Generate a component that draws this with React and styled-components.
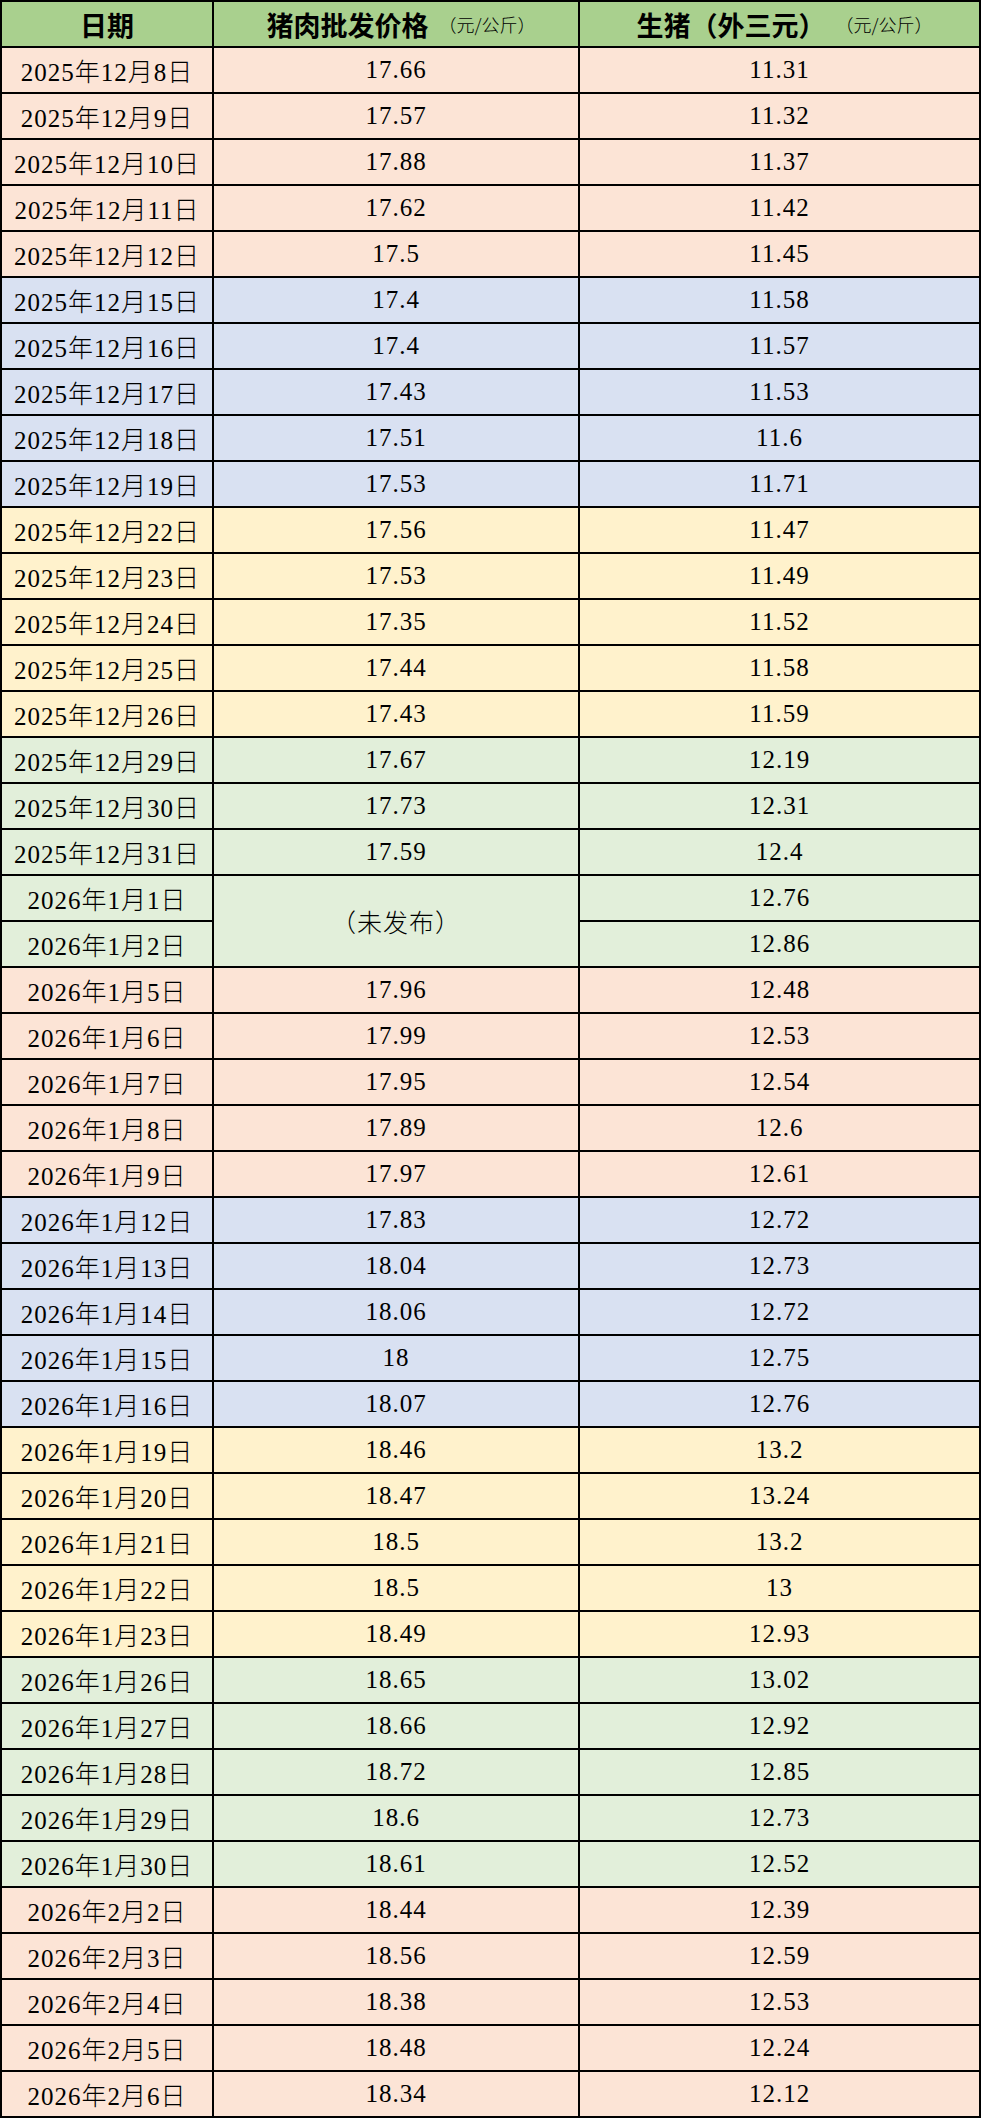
import React from "react";
import styled, { createGlobalStyle } from "styled-components";

const GlobalStyle = createGlobalStyle`
  html, body {
    margin: 0;
    padding: 0;
    background: #ffffff;
  }
  body {
    font-family: "Liberation Serif", "Noto Sans CJK SC", serif;
  }
`;

// 每周一个底色，和原表格一致
const tones = {
  peach: "#fce4d6",
  blue: "#d9e1f2",
  yellow: "#fff2cc",
  green: "#e2efda",
};

const weeks = [
  {
    tone: "peach",
    rows: [
      ["2025年12月8日", "17.66", "11.31"],
      ["2025年12月9日", "17.57", "11.32"],
      ["2025年12月10日", "17.88", "11.37"],
      ["2025年12月11日", "17.62", "11.42"],
      ["2025年12月12日", "17.5", "11.45"],
    ],
  },
  {
    tone: "blue",
    rows: [
      ["2025年12月15日", "17.4", "11.58"],
      ["2025年12月16日", "17.4", "11.57"],
      ["2025年12月17日", "17.43", "11.53"],
      ["2025年12月18日", "17.51", "11.6"],
      ["2025年12月19日", "17.53", "11.71"],
    ],
  },
  {
    tone: "yellow",
    rows: [
      ["2025年12月22日", "17.56", "11.47"],
      ["2025年12月23日", "17.53", "11.49"],
      ["2025年12月24日", "17.35", "11.52"],
      ["2025年12月25日", "17.44", "11.58"],
      ["2025年12月26日", "17.43", "11.59"],
    ],
  },
  {
    tone: "green",
    rows: [
      ["2025年12月29日", "17.67", "12.19"],
      ["2025年12月30日", "17.73", "12.31"],
      ["2025年12月31日", "17.59", "12.4"],
      ["2026年1月1日", "（未发布）", "12.76", 2],
      ["2026年1月2日", null, "12.86"],
    ],
  },
  {
    tone: "peach",
    rows: [
      ["2026年1月5日", "17.96", "12.48"],
      ["2026年1月6日", "17.99", "12.53"],
      ["2026年1月7日", "17.95", "12.54"],
      ["2026年1月8日", "17.89", "12.6"],
      ["2026年1月9日", "17.97", "12.61"],
    ],
  },
  {
    tone: "blue",
    rows: [
      ["2026年1月12日", "17.83", "12.72"],
      ["2026年1月13日", "18.04", "12.73"],
      ["2026年1月14日", "18.06", "12.72"],
      ["2026年1月15日", "18", "12.75"],
      ["2026年1月16日", "18.07", "12.76"],
    ],
  },
  {
    tone: "yellow",
    rows: [
      ["2026年1月19日", "18.46", "13.2"],
      ["2026年1月20日", "18.47", "13.24"],
      ["2026年1月21日", "18.5", "13.2"],
      ["2026年1月22日", "18.5", "13"],
      ["2026年1月23日", "18.49", "12.93"],
    ],
  },
  {
    tone: "green",
    rows: [
      ["2026年1月26日", "18.65", "13.02"],
      ["2026年1月27日", "18.66", "12.92"],
      ["2026年1月28日", "18.72", "12.85"],
      ["2026年1月29日", "18.6", "12.73"],
      ["2026年1月30日", "18.61", "12.52"],
    ],
  },
  {
    tone: "peach",
    rows: [
      ["2026年2月2日", "18.44", "12.39"],
      ["2026年2月3日", "18.56", "12.59"],
      ["2026年2月4日", "18.38", "12.53"],
      ["2026年2月5日", "18.48", "12.24"],
      ["2026年2月6日", "18.34", "12.12"],
    ],
  },
];

const App = () => {
  return (
    <>
      <GlobalStyle />
      <Sheet>
        <HeadCell>日期</HeadCell>
        <HeadCell>
          猪肉批发价格<Unit>（元/公斤）</Unit>
        </HeadCell>
        <HeadCell>
          生猪（外三元）<Unit>（元/公斤）</Unit>
        </HeadCell>

        {weeks.map((week) =>
          week.rows.map(([date, pork, hog, span]) => (
            <React.Fragment key={date}>
              <Cell $tone={week.tone}>{date}</Cell>
              {pork !== null && (
                <Cell $tone={week.tone} $span={span}>
                  {pork}
                </Cell>
              )}
              <Cell $tone={week.tone}>{hog}</Cell>
            </React.Fragment>
          ))
        )}
      </Sheet>
    </>
  );
};

export default App;

const Sheet = styled.div`
  display: grid;
  grid-template-columns: 210px 364px 399px;
  grid-auto-rows: 44px;
  gap: 2px;
  padding: 2px;
  width: 981px;
  box-sizing: border-box;
  background: #000000;
`;

const HeadCell = styled.div`
  display: flex;
  align-items: center;
  justify-content: center;
  background: #a9d08e;
  color: #000000;
  font-family: "Noto Sans CJK SC", sans-serif;
  font-size: 27px;
  font-weight: 700;
  white-space: nowrap;
`;

const Unit = styled.span`
  font-family: "Noto Sans CJK SC", sans-serif;
  font-size: 18px;
  font-weight: 300;
  margin-left: 10px;
  margin-right: -10px;
`;

const Cell = styled.div`
  display: flex;
  align-items: center;
  justify-content: center;
  grid-row: ${(p) => (p.$span ? `span ${p.$span}` : "auto")};
  background: ${(p) => tones[p.$tone]};
  color: #000000;
  font-family: "Liberation Serif", "Noto Sans CJK SC", serif;
  font-size: 25px;
  font-weight: 300;
  letter-spacing: 1px;
  white-space: nowrap;
`;
